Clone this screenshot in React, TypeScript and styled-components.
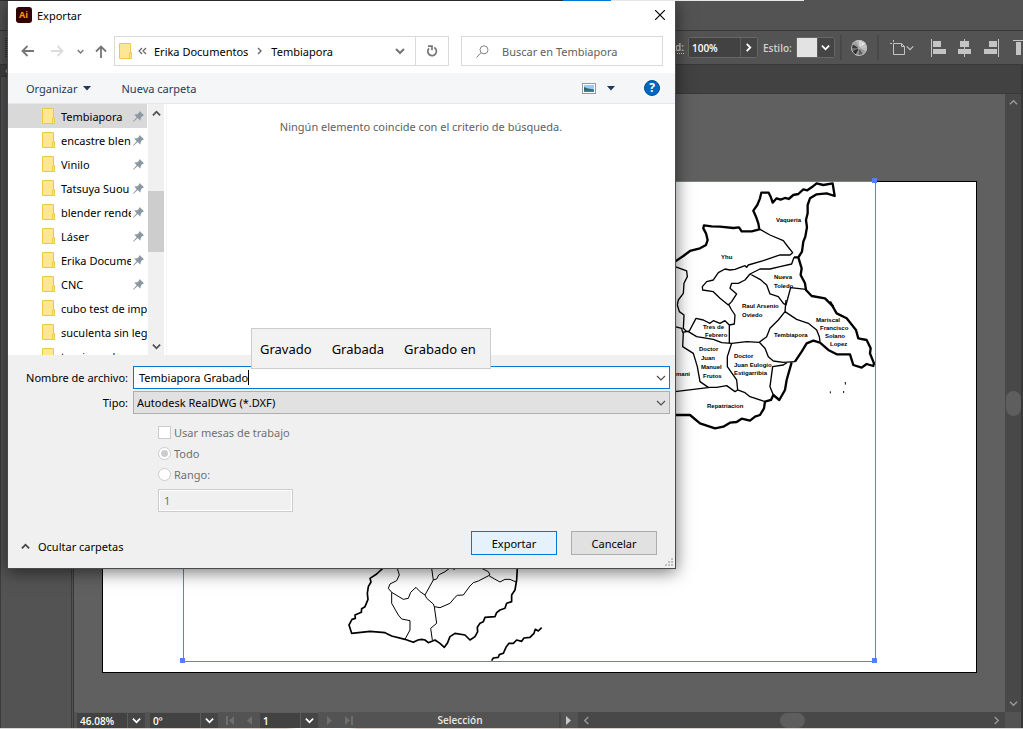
import React from "react";
import styled, { createGlobalStyle } from "styled-components";

const GlobalStyle = createGlobalStyle`
  *, *::before, *::after { box-sizing: border-box; }
  html, body, #root { height: 100%; }
  body { margin: 0; background: #535353; overflow: hidden; }
  body, button, input, select { font-family: "Noto Sans", "Open Sans", sans-serif; font-size: 11px; }
  button { padding: 0; border: 0; background: none; color: inherit; }
  svg { display: block; flex: none; }
`;

/* ---------- Illustrator workspace ---------- */

const Workspace = styled.div`
  position: relative;
  display: flex;
  flex-direction: column;
  height: 100vh;
  min-height: 600px;
  background: #535353;
  color: #dcdcdc;
  overflow: hidden;
`;

const EdgeStrip = styled.div`
  position: relative;
  z-index: 3;
  flex: none;
  display: grid;
  grid-template-columns: 563fr 48fr 193fr 219fr;
  height: 1px;
`;

const EdgePart = styled.span<{ $color: string }>`
  background: ${(p) => p.$color};
`;

const MenuBar = styled.div`
  flex: none;
  height: 29px;
`;

const ControlBar = styled.div`
  flex: none;
  display: grid;
  grid-template-columns: 675px 1fr;
  align-items: center;
  height: 35px;
  border: solid #383838;
  border-width: 1px 0;
  font-family: "Open Sans", sans-serif;
  font-size: 10px;
`;

const Gripper = styled.div`
  width: 3px;
  height: 20px;
  margin-left: 5px;
  background: repeating-linear-gradient(#333 0 1px, #535353 1px 2px);
`;

const ControlItems = styled.div`
  display: flex;
  align-items: center;
  overflow: hidden;
`;

const ControlLabel = styled.label<{ $dotted?: boolean }>`
  flex: none;
  margin-right: 4px;
  font-weight: 600;
  line-height: 12px;
  color: #d0d0d0;
  border-bottom: ${(p) => (p.$dotted ? "1px dotted #d0d0d0" : "0")};
`;

const ControlField = styled.div<{ $w: number }>`
  flex: none;
  display: grid;
  grid-template-columns: 1fr 17px;
  width: ${(p) => p.$w}px;
  height: 21px;
  margin-right: 5px;
  border: 1px solid #666;
  border-radius: 2px;
  background: #424242;
`;

const DarkInput = styled.input`
  min-width: 0;
  width: 100%;
  height: 100%;
  padding: 0 3px;
  border: 0;
  background: #424242;
  color: #fff;
  font-family: "Open Sans", sans-serif;
  font-size: 10px;
  font-weight: 600;
  outline: none;
`;

const DarkButton = styled.button`
  display: flex;
  align-items: center;
  justify-content: center;
  height: 100%;
  border-left: 1px solid #5c5c5c;
  background: #454545;
`;

const Swatch = styled.span`
  background: #e3e3e3;
`;

const Divider = styled.span<{ $mr: number }>`
  flex: none;
  width: 2px;
  height: 25px;
  margin-right: ${(p) => p.$mr}px;
  background: #484848;
`;

const ToolButton = styled.button<{ $mr: number }>`
  flex: none;
  display: flex;
  align-items: center;
  margin-right: ${(p) => p.$mr}px;
`;

const Main = styled.div`
  flex: 1;
  min-height: 0;
  display: grid;
  grid-template-columns: 72px 1fr;
`;

const ToolPanel = styled.div`
  border-right: 1px solid #3c3c3c;
  border-left: 1px solid #3c3c3c;
  background: #535353;
`;

const ToolPanelHead = styled.div`
  height: 12px;
  padding-left: 4px;
  border-bottom: 1px solid #383838;
  background: #424242;
  color: #aaa;
  font-size: 10px;
  line-height: 10px;
`;

const DocumentPanel = styled.div`
  display: flex;
  flex-direction: column;
  min-width: 0;
  margin-left: 1px;
  border: solid #383838;
  border-width: 0 2px 1px 1px;
`;

const TabStrip = styled.div`
  flex: none;
  height: 29px;
  border-bottom: 1px solid #383838;
  background: #424242;
`;

const CanvasRow = styled.div`
  flex: 1;
  min-height: 0;
  display: grid;
  grid-template-columns: 1fr 16px;
`;

const Canvas = styled.div`
  display: flex;
  padding: 87px 28px 39px;
  background: #606060;
`;

const Artboard = styled.div`
  flex: 1;
  min-width: 0;
  border: 1px solid #000;
  background: #fff;
`;

const Drawing = styled.svg`
  margin: -1px;
  overflow: visible;
`;

const MapText = styled.text`
  font-family: "Liberation Sans", sans-serif;
  font-size: 6px;
  font-weight: 700;
  fill: #000;
`;

const VScroll = styled.div`
  display: flex;
  flex-direction: column;
  align-items: center;
  justify-content: space-between;
  padding: 4px 0;
  background: #484848;
`;

const Thumb = styled.span<{ $w: number; $h: number }>`
  width: ${(p) => p.$w}px;
  height: ${(p) => p.$h}px;
  border-radius: 8px;
  background: #5e5e5e;
`;

const StatusBar = styled.div`
  flex: none;
  display: grid;
  grid-template-columns: 3px 68px 5px 68px 42px 58px 43px 198px 2px 17px 1fr 16px;
  height: 16px;
  background: #484848;
  font-family: "Open Sans", sans-serif;
  font-size: 10px;
  color: #e6e6e6;
`;

const StatusCell = styled.div<{ $light?: boolean }>`
  display: flex;
  align-items: center;
  justify-content: center;
  gap: 9px;
  background: ${(p) => (p.$light ? "#535353" : "#484848")};
  font-weight: 600;
`;

const StatusField = styled.div`
  display: grid;
  grid-template-columns: 1fr 18px;
  border-top: 1px solid #5c5c5c;
`;

const HScroll = styled.div`
  display: flex;
  align-items: center;
  justify-content: space-between;
  padding: 0 4px;
  background: #484848;
`;

const HTrack = styled.div`
  flex: 1;
  display: grid;
  grid-template-columns: 187fr 25px 186fr;
`;

const ScreenEdge = styled.div`
  flex: none;
  height: 1px;
  background: linear-gradient(90deg, #d8d8d8, #d9cfc8 28%, #fff 29%, #fff 34%, #d9cfc8 35%, #d8d8d8);
`;

/* ---------- Export dialog ---------- */

const Dialog = styled.section`
  position: absolute;
  z-index: 2;
  top: 0;
  left: 7px;
  width: min(669px, calc(100% - 14px));
  border: 1px solid #4a4a4a;
  border-top-color: #2d2a2b;
  background: #fff;
  color: #000;
  box-shadow: 0 3px 16px rgba(0, 0, 0, 0.55);
`;

const TitleBar = styled.header`
  display: flex;
  align-items: center;
  height: 28px;
  padding: 0 10px 0 8px;
`;

const Title = styled.h1`
  flex: 1;
  margin: 0 0 0 5px;
  font-size: 11px;
  font-weight: 400;
`;

const AddressRow = styled.div`
  display: flex;
  align-items: center;
  height: 44px;
  padding: 0 12px 0 13px;
`;

const NavButton = styled.button<{ $mr: number }>`
  flex: none;
  margin-right: ${(p) => p.$mr}px;
`;

const AddressBox = styled.div`
  flex: 1;
  min-width: 0;
  display: flex;
  align-items: center;
  height: 30px;
  padding-left: 4px;
  border: 1px solid #d9d9d9;
`;

const Crumb = styled.a`
  margin: 0 2px;
  color: #000;
  text-decoration: none;
  white-space: nowrap;
`;

const Spacer = styled.span`
  flex: 1;
`;

const RefreshButton = styled.button`
  display: flex;
  align-items: center;
  justify-content: center;
  width: 33px;
  height: 28px;
  margin-left: 10px;
  border-left: 1px solid #d9d9d9;
`;

const SearchBox = styled.label`
  flex: none;
  display: flex;
  align-items: center;
  width: 202px;
  height: 30px;
  margin-left: 12px;
  padding-left: 14px;
  border: 1px solid #d9d9d9;
`;

const SearchInput = styled.input`
  flex: 1;
  min-width: 0;
  margin-left: 13px;
  padding: 0;
  border: 0;
  outline: none;
  &::placeholder { color: #606060; opacity: 1; }
`;

const Toolbar = styled.div`
  display: flex;
  align-items: center;
  height: 31px;
  padding: 0 15px 0 18px;
  border-bottom: 1px solid #e3e6ea;
  background: #f5f6f7;
  color: #1e395b;
`;

const ToolbarButton = styled.button<{ $mr?: number }>`
  display: flex;
  align-items: center;
  gap: 6px;
  margin-right: ${(p) => p.$mr ?? 0}px;
`;

const Browser = styled.div`
  display: grid;
  grid-template-columns: 139px 17px 1fr;
  height: 251px;
`;

const FolderList = styled.ul`
  margin: 0;
  padding: 0;
  list-style: none;
  overflow: hidden;
`;

const FolderItem = styled.li<{ $selected?: boolean }>`
  display: flex;
  align-items: center;
  height: 24px;
  padding: 0 0 0 34px;
  background: ${(p) => (p.$selected ? "#d9d9d9" : "transparent")};
`;

const FolderName = styled.span`
  flex: 1;
  min-width: 0;
  margin-left: 6px;
  overflow: hidden;
  white-space: nowrap;
`;

const PinSlot = styled.span`
  margin: 0 3px 0 2px;
`;

const ListScroll = styled.div`
  display: grid;
  grid-template-rows: 87px 61px 1fr;
  justify-items: center;
  margin-left: 1px;
  padding-bottom: 4px;
  background: #f0f0f0;
`;

const ListThumb = styled.span`
  width: 100%;
  background: #cdcdcd;
`;

const ScrollEnd = styled.span<{ $end?: boolean }>`
  align-self: ${(p) => (p.$end ? "end" : "start")};
  padding: ${(p) => (p.$end ? "0" : "5px 0 0")};
`;

const FilePane = styled.div`
  margin-left: 2px;
  padding-top: 14px;
  border-left: 1px solid #f5f5f5;
  color: #606060;
  line-height: 18px;
  text-align: center;
`;

const FormPanel = styled.form`
  padding: 11px 5px 0 8px;
  height: 213px;
  background: #f0f0f0;
`;

const FieldRow = styled.div`
  position: relative;
  display: grid;
  grid-template-columns: 112px 1fr;
  column-gap: 5px;
  align-items: center;
  margin-bottom: 2px;
`;

const FieldLabel = styled.label`
  text-align: right;
  white-space: nowrap;
`;

const Combo = styled.div<{ $active?: boolean }>`
  display: flex;
  align-items: center;
  height: 23px;
  padding-right: 3px;
  border: 1px solid ${(p) => (p.$active ? "#0078d7" : "#adadad")};
  background: ${(p) => (p.$active ? "#fff" : "#e1e1e1")};
`;

const NameInput = styled.input`
  field-sizing: content;
  min-width: 0;
  padding: 0 0 0 5px;
  border: 0;
  background: none;
  outline: none;
  caret-color: transparent;
`;

const Caret = styled.span`
  width: 1px;
  height: 15px;
  background: #000;
`;

const TypeSelect = styled.select`
  flex: 1;
  min-width: 0;
  padding: 0 3px;
  border: 0;
  background: none;
  appearance: none;
  outline: none;
  color: #000;
`;

const Suggestions = styled.div`
  position: absolute;
  z-index: 1;
  bottom: 20px;
  left: 235px;
  display: flex;
  align-items: center;
  gap: 20px;
  height: 41px;
  padding: 0 14px 0 8px;
  border: 1px solid #ccc;
  background: #f2f2f2;
`;

const Suggestion = styled.button`
  font-size: 13px;
  white-space: nowrap;
`;

const Options = styled.fieldset`
  margin: 12px 0 0 142px;
  padding: 0;
  border: 0;
  color: #707070;
`;

const Option = styled.label`
  display: flex;
  align-items: center;
  gap: 3px;
  height: 13px;
  margin-bottom: 8px;
`;

const Check = styled.input`
  appearance: none;
  width: 13px;
  height: 13px;
  margin: 0;
  border: 1px solid #ccc;
  background: #fff;
`;

const Radio = styled(Check)`
  border-radius: 50%;
  &:checked { background: radial-gradient(#ccc 0 3px, #fff 4px); }
`;

const RangeInput = styled.input`
  display: block;
  width: 135px;
  height: 23px;
  padding: 0 5px;
  border: 1px solid #ccc;
  background: #f0f0f0;
  box-shadow: inset 0 0 0 1px #fff;
  color: #707070;
`;

const Footer = styled.footer`
  display: flex;
  align-items: center;
  gap: 14px;
  margin: 19px 13px 0 5px;
`;

const HideFolders = styled.button`
  display: flex;
  align-items: center;
  gap: 8px;
  margin-right: auto;
  padding-top: 6px;
`;

const ActionButton = styled.button<{ $primary?: boolean }>`
  width: 86px;
  height: 24px;
  border: 1px solid ${(p) => (p.$primary ? "#0078d7" : "#adadad")};
  background: ${(p) => (p.$primary ? "#e5f1fb" : "#e1e1e1")};
`;

const Grip = styled.svg`
  position: absolute;
  right: 2px;
  bottom: 2px;
`;

/* ---------- Icons ---------- */

type Dir = "up" | "down" | "left" | "right";
const turns: Record<Dir, number> = { down: 0, left: 90, up: 180, right: 270 };

const Chevron = ({ dir = "down", color = "#fff", w = 2, size = 9 }: { dir?: Dir; color?: string; w?: number; size?: number }) => (
  <svg width={size} height={size} viewBox="0 0 10 10" fill="none" stroke={color} strokeWidth={w}>
    <path d="M1 3l4 4 4-4" transform={`rotate(${turns[dir]} 5 5)`} />
  </svg>
);

const CrumbArrow = () => (
  <svg width="19" height="8" viewBox="0 0 19 8" fill="none" stroke="#666" strokeWidth="1.400">
    <path d="M8 1l3 3-3 3" />
  </svg>
);

const DropArrow = () => (
  <svg width="8" height="5" viewBox="0 0 8 5">
    <path d="M0 0h8L4 4.500z" fill="#1e395b" />
  </svg>
);

const Folder = () => (
  <svg width="13" height="16" viewBox="0 0 13 16">
    <path d="M.5.5h11v9h1v6H.5z" fill="#ffe693" stroke="#ecc84c" />
    <path d="M10.500 15.500v-5.500h2" fill="none" stroke="#ecc84c" />
  </svg>
);

const Pin = () => (
  <svg width="11" height="11" viewBox="0 0 11 11" fill="#8b98a3">
    <path d="M6.500 0L11 4.200 9.600 4.900 7.800 6.700 7.500 9.700 4.700 7 .5 10.800 0 10.300 3.700 6.200 1.200 3.500 4.400 3.200 6.100 1.500z" />
  </svg>
);

const Play = ({ flip, bar, color = "#6e6e6e" }: { flip?: boolean; bar?: boolean; color?: string }) => (
  <svg width="9" height="9" viewBox="0 0 9 9" fill={color}>
    <g transform={flip ? "translate(9 0) scale(-1 1)" : undefined}>
      <path d="M1 0l5 4.500L1 9z" />
      {bar && <path d="M7 0h2v9H7z" />}
    </g>
  </svg>
);

const Wheel = () => (
  <svg width="16" height="16" viewBox="0 0 16 16">
    {["#d8d8d8", "#e6e6e6", "#c4c4c4", "#bababa", "#9a9a9a", "#606060", "#8a8a8a", "#292929", "#6a6a6a", "#3a3a3a", "#9f9f9f", "#b4b4b4"].map((c, i) => (
      <path key={i} d="M8 8L8 0A8 8 0 0 1 12 1.070z" fill={c} transform={`rotate(${i * 30} 8 8)`} />
    ))}
    <circle cx="8" cy="8" r="7.500" fill="none" stroke="#bdbdbd" />
    <circle cx="8" cy="8" r="1.500" fill="#aaa" />
  </svg>
);

/* ---------- Map drawing ---------- */

const upperThick =
  "M15 275L40 258 60 243 90 235 108 225 113 210 108 190 100 175 102 166 125 169 150 170 190 174 207 172 215 184 245 184 268 178 265 160 258 140 250 122 262 105 270 85 274 68 296 68 302 80 308 98 320 85 332 89 345 84 356 87 370 75 385 72 400 58 412 61 425 52 440 40 460 45 488 40 494 78 470 70 440 73 420 85 413 105 413 130 408 150 411 172 406 200 400 215 396 245 385 262 395 295 392 315 405 340 408 360 425 378 465 385 490 410M385 262L372 262";
const upperThin =
  "M270 178L300 195 340 212 352 228 368 248 360 255 330 255 280 272 235 285 230 292 225 287 195 298 180 300 165 297 145 308 130 330 110 335 97 350 98 360 130 365 150 385 175 405M372 262L365 282 330 290 300 297 270 297 240 312 225 330 205 340 185 340 180 355 200 372 185 395 175 405M240 312L270 328 290 345 300 372 325 380 340 400 348 405 362 353 408 358M15 290L50 303 52 320 42 340 40 370 25 390 22 405";
const lowerThick =
  "M365 187L350 240 345 270 328 300 310 285 303 300 285 305 282 325 270 345 255 350 240 362 215 356 200 366 180 368 160 380 135 385 90 370 60 345 15 345M375 185L395 155 410 130 430 122 450 128 475 150 500 163 540 163 550 195 575 203 590 192 610 198 612 190 600 160 602 145 590 120 565 115 558 90 530 55 500 40 480 5";
const lowerMid =
  "M22 15L28 35 42 45 40 85 50 95M15 80L35 85 38 97 58 93 78 55 100 60 120 70 130 62 150 70 165 62 178 75 178 130M175 12L185 30 195 45 193 72 178 75M55 95L80 110 130 118 155 128 185 130 230 125 268 127 290 110 300 85 325 60 345 35 348 0M345 35L380 58 415 70 440 90 448 110 450 125M268 127L285 145 295 170 310 183 340 187 375 185M310 285L300 260 308 200 340 195 352 187M285 305L240 290 225 278 203 270 200 240 172 200 172 170 185 130M203 270L195 275 170 257 140 262 120 262 15 275M40 97L38 140 70 160 82 200 90 245 115 262";
const southThick =
  "M158 25L140 42 120 55 123 66 115 80 112 100 114 118 105 140 95 146 94 157 75 165 76 175 66 178 57 195 65 220 120 214 165 218 185 228 225 238 250 247 264 240 275 238 285 240 295 248 315 240 330 250 343 262 352 250 360 230 375 220 405 225 420 240 435 230 443 215 442 202 450 190 460 185 465 172 495 170 500 158 510 150 525 145 530 130 545 125 545 105 555 90 560 60 562 25M485 302L490 294 505 292 508 284 520 280 528 262 537 250 550 250 560 240 575 244 582 234 600 232 612 220 616 208 625 213 635 203";
const southThin =
  "M202 25L208 45 200 62 180 72 175 85 185 97 220 118 235 115 242 97 258 82 270 95 285 105 310 60 305 25M310 60L320 57 326 45 345 35 360 24 375 28M285 105L290 115 310 132 313 140 330 143 360 130 375 112 382 106 400 105 420 78 430 68 445 63 480 45 475 35 455 25M478 48L510 66 525 58 540 58 558 66M185 97L185 130 205 165 215 177 240 182 240 210 225 238M313 140L320 190 302 205 307 240";

const labels: [number, number, string][] = [
  [776, 222, "Vaqueria"], [721, 259, "Yhu"],
  [774, 279, "Nueva"], [774, 288, "Toledo"],
  [742, 308, "Raul Arsenio"], [742, 317, "Oviedo"],
  [703, 329, "Tres de"], [705, 337, "Febrero"],
  [774, 337, "Tembiapora"],
  [816, 322, "Mariscal"], [820, 330, "Francisco"], [825, 338, "Solano"], [830, 346, "Lopez"],
  [699, 351, "Doctor"], [701, 360, "Juan"], [701, 369, "Manuel"], [703, 378, "Frutos"],
  [734, 358, "Doctor"], [734, 367, "Juan Eulogio"], [734, 375, "Estigarribia"],
  [707, 408, "Repatriacion"], [676, 376, "mani"],
];

const MapDrawing = () => (
  <Drawing width="875" height="492" viewBox="102 181 875 492" fill="none" stroke="#000" strokeLinejoin="round">
    <g transform="translate(670 170) scale(.3333)">
      <path d={upperThick} strokeWidth="7" />
      <path d={upperThin} strokeWidth="4" />
    </g>
    <g transform="translate(670 300) scale(.3333)">
      <path d={lowerThick} strokeWidth="7" />
      <path d={lowerMid} strokeWidth="4" />
      <path d="M526 246v8M481 274v6M521 273v6" strokeWidth="3" />
    </g>
    <g transform="translate(330 560) scale(.3333)">
      <path d={southThick} strokeWidth="5" />
      <path d={southThin} strokeWidth="3" />
    </g>
    <g stroke="none">
      {labels.map(([x, y, t], i) => (
        <MapText key={i} x={x} y={y}>{t}</MapText>
      ))}
    </g>
    <path d="M182.500 181.500H875.500V661.500H183.500V181.500" stroke="#4f80ff" />
    <path d="M872 178h5v5h-5zM180 658h5v5h-5zM872 658h5v5h-5z" fill="#4f80ff" stroke="none" />
  </Drawing>
);

/* ---------- Page ---------- */

const folders: { name: string; pinned: boolean }[] = [
  { name: "Tembiapora", pinned: true },
  { name: "encastre blen", pinned: true },
  { name: "Vinilo", pinned: true },
  { name: "Tatsuya Suou", pinned: true },
  { name: "blender rende", pinned: true },
  { name: "Láser", pinned: true },
  { name: "Erika Docume", pinned: true },
  { name: "CNC", pinned: true },
  { name: "cubo test de imp", pinned: false },
  { name: "suculenta sin leg", pinned: false },
  { name: "teori pruebas", pinned: false },
];

const ExportDialog = () => (
  <Dialog role="dialog" aria-label="Exportar">
    <TitleBar>
      <svg width="16" height="16" viewBox="0 0 16 16">
        <rect width="16" height="16" rx="3" fill="#310000" />
        <text x="3" y="11" fontFamily="Open Sans, sans-serif" fontSize="9" fontWeight="700" fill="#ff9a00">Ai</text>
      </svg>
      <Title>Exportar</Title>
      <button aria-label="Cerrar">
        <svg width="10" height="10" viewBox="0 0 10 10" stroke="#000" strokeWidth="1.200"><path d="M0 0l10 10M10 0L0 10" /></svg>
      </button>
    </TitleBar>

    <AddressRow>
      <NavButton aria-label="Atrás" $mr={17}>
        <svg width="13" height="12" viewBox="0 0 13 12" fill="none" stroke="#767676" strokeWidth="1.800"><path d="M13 6H1.500M6.500 1l-5 5 5 5" /></svg>
      </NavButton>
      <NavButton aria-label="Adelante" $mr={13}>
        <svg width="13" height="12" viewBox="0 0 13 12" fill="none" stroke="#dcdcdc" strokeWidth="1.800"><path d="M0 6h11.500M6.500 1l5 5-5 5" /></svg>
      </NavButton>
      <NavButton aria-label="Recientes" $mr={11}>
        <Chevron color="#767676" size={7} />
      </NavButton>
      <NavButton aria-label="Subir" $mr={7}>
        <svg width="12" height="13" viewBox="0 0 12 13" fill="none" stroke="#767676" strokeWidth="1.800"><path d="M6 13V1.500M1 6.500l5-5 5 5" /></svg>
      </NavButton>
      <AddressBox>
        <Folder />
        <svg width="20" height="8" viewBox="0 0 20 8" fill="none" stroke="#666" strokeWidth="1.200"><path d="M10 1L7 4l3 3M14 1l-3 3 3 3" /></svg>
        <Crumb href="#">Erika Documentos</Crumb>
        <CrumbArrow />
        <Crumb href="#">Tembiapora</Crumb>
        <Spacer />
        <button aria-label="Ubicaciones anteriores"><Chevron color="#767676" size={10} /></button>
        <RefreshButton aria-label="Actualizar">
          <svg width="12" height="12" viewBox="0 0 12 12" fill="none" stroke="#767676" strokeWidth="1.700"><path d="M8.200 2.600A4.300 4.300 0 1 1 3 3.400M2 1.200h4v4" /></svg>
        </RefreshButton>
      </AddressBox>
      <SearchBox>
        <svg width="13" height="13" viewBox="0 0 13 13" fill="none" stroke="#8a7f86"><circle cx="8" cy="4.800" r="4" /><path d="M5 7.800L.5 12.500" /></svg>
        <SearchInput aria-label="Buscar" placeholder="Buscar en Tembiapora" />
      </SearchBox>
    </AddressRow>

    <Toolbar>
      <ToolbarButton $mr={30}>
        Organizar
        <DropArrow />
      </ToolbarButton>
      <ToolbarButton>Nueva carpeta</ToolbarButton>
      <Spacer />
      <ToolbarButton aria-label="Cambiar la vista" $mr={11}>
        <svg width="14" height="11" viewBox="0 0 14 11">
          <rect x=".5" y=".5" width="13" height="10" fill="#fff" stroke="#999" />
          <path d="M2 2h10v7H2z" fill="#9cc9f5" />
          <path d="M2 4l4 1.500 6 1V8H2z" fill="#2f6b58" />
          <path d="M2 7.500h10V9H2z" fill="#3f7fc0" />
        </svg>
      </ToolbarButton>
      <ToolbarButton aria-label="Más opciones" $mr={29}>
        <DropArrow />
      </ToolbarButton>
      <ToolbarButton aria-label="Ayuda">
        <svg width="16" height="16" viewBox="0 0 16 16">
          <circle cx="8" cy="8" r="7.500" fill="#0067c0" stroke="#004f94" />
          <text x="8" y="12" textAnchor="middle" fontFamily="Open Sans, sans-serif" fontSize="12" fontWeight="700" fill="#fff">?</text>
        </svg>
      </ToolbarButton>
    </Toolbar>

    <Browser>
      <FolderList>
        {folders.map((f, i) => (
          <FolderItem key={f.name} $selected={i === 0}>
            <Folder />
            <FolderName>{f.name}</FolderName>
            {f.pinned && <PinSlot><Pin /></PinSlot>}
          </FolderItem>
        ))}
      </FolderList>
      <ListScroll>
        <ScrollEnd><Chevron dir="up" color="#505050" /></ScrollEnd>
        <ListThumb />
        <ScrollEnd $end><Chevron color="#505050" /></ScrollEnd>
      </ListScroll>
      <FilePane>Ningún elemento coincide con el criterio de búsqueda.</FilePane>
    </Browser>

    <FormPanel onSubmit={(e) => e.preventDefault()}>
      <FieldRow>
        <FieldLabel htmlFor="file-name">Nombre de archivo:</FieldLabel>
        <Combo $active>
          <NameInput id="file-name" defaultValue="Tembiapora Grabado" />
          <Caret />
          <Spacer />
          <Chevron color="#505050" w={1.2} size={10} />
        </Combo>
        <Suggestions>
          <Suggestion type="button">Gravado</Suggestion>
          <Suggestion type="button">Grabada</Suggestion>
          <Suggestion type="button">Grabado en</Suggestion>
        </Suggestions>
      </FieldRow>
      <FieldRow>
        <FieldLabel htmlFor="file-type">Tipo:</FieldLabel>
        <Combo>
          <TypeSelect id="file-type"><option>Autodesk RealDWG (*.DXF)</option></TypeSelect>
          <Chevron color="#505050" w={1.2} size={10} />
        </Combo>
      </FieldRow>
      <Options disabled>
        <Option><Check type="checkbox" />Usar mesas de trabajo</Option>
        <Option><Radio type="radio" name="boards" defaultChecked />Todo</Option>
        <Option><Radio type="radio" name="boards" />Rango:</Option>
        <RangeInput aria-label="Rango" defaultValue="1" />
      </Options>
      <Footer>
        <HideFolders type="button"><Chevron dir="up" color="#444" />Ocultar carpetas</HideFolders>
        <ActionButton type="submit" $primary>Exportar</ActionButton>
        <ActionButton type="button">Cancelar</ActionButton>
      </Footer>
    </FormPanel>
    <Grip width="8" height="8" viewBox="0 0 8 8" fill="#bfbfbf">
      <path d="M6 0h2v2H6zM3 3h2v2H3zM6 3h2v2H6zM0 6h2v2H0zM3 6h2v2H3zM6 6h2v2H6z" />
    </Grip>
  </Dialog>
);

export default function App() {
  return (
    <Workspace>
      <GlobalStyle />
      <EdgeStrip>
        <EdgePart $color="#2d2a2b" />
        <EdgePart $color="#0078d7" />
        <EdgePart $color="#e6e6e6" />
        <EdgePart $color="#535353" />
      </EdgeStrip>
      <MenuBar />
      <ControlBar>
        <Gripper />
        <ControlItems>
          <ControlLabel htmlFor="opacity" $dotted>d:</ControlLabel>
          <ControlField $w={70}>
            <DarkInput id="opacity" defaultValue="100%" />
            <DarkButton aria-label="Opacidad"><Chevron dir="right" /></DarkButton>
          </ControlField>
          <ControlLabel as="span">Estilo:</ControlLabel>
          <ControlField $w={39}>
            <Swatch />
            <DarkButton aria-label="Estilo"><Chevron /></DarkButton>
          </ControlField>
          <Divider $mr={9} />
          <ToolButton aria-label="Volver a colorear" $mr={10}><Wheel /></ToolButton>
          <Divider $mr={11} />
          <ToolButton aria-label="Mesa de trabajo" $mr={17}>
            <svg width="16" height="16" viewBox="0 0 16 16" fill="none" stroke="#c4c4c4"><path d="M3.500 3.500h8l3 3v8h-11zM3.500 0v2M0 3.500h2M11.500 3.500v3h3" /></svg>
            <Chevron color="#c4c4c4" w={1.5} size={8} />
          </ToolButton>
          <ToolButton aria-label="Alinear a la izquierda" $mr={12}>
            <svg width="15" height="18" viewBox="0 0 15 18" fill="#c4c4c4"><path d="M0 0h1v18H0zM2 2h8v6H2zM2 10h13v5H2z" /></svg>
          </ToolButton>
          <ToolButton aria-label="Centrar" $mr={13}>
            <svg width="13" height="18" viewBox="0 0 13 18" fill="#c4c4c4"><path d="M6 0h1v18H6zM2 2h9v6H2zM0 10h13v5H0z" /></svg>
          </ToolButton>
          <ToolButton aria-label="Alinear a la derecha" $mr={14}>
            <svg width="15" height="18" viewBox="0 0 15 18" fill="#c4c4c4"><path d="M14 0h1v18h-1zM5 2h8v6H5zM0 10h13v5H0z" /></svg>
          </ToolButton>
          <ToolButton aria-label="Alinear arriba" $mr={0}>
            <svg width="18" height="15" viewBox="0 0 18 15" fill="#c4c4c4"><path d="M0 0h18v1H0zM3 2h5v13H3zM10 2h6v8h-6z" /></svg>
          </ToolButton>
        </ControlItems>
      </ControlBar>

      <Main>
        <ToolPanel>
          <ToolPanelHead>«</ToolPanelHead>
        </ToolPanel>
        <DocumentPanel>
          <TabStrip />
          <CanvasRow>
            <Canvas>
              <Artboard><MapDrawing /></Artboard>
            </Canvas>
            <VScroll>
              <Chevron dir="up" color="#9a9a9a" w={1.5} />
              <Thumb $w={15} $h={25} />
              <Chevron color="#9a9a9a" w={1.5} />
            </VScroll>
          </CanvasRow>
          <StatusBar>
            <StatusCell $light />
            <StatusField>
              <DarkInput aria-label="Zoom" defaultValue="46.08%" />
              <DarkButton aria-label="Niveles de zoom"><Chevron /></DarkButton>
            </StatusField>
            <StatusCell $light />
            <StatusField>
              <DarkInput aria-label="Rotación" defaultValue="0º" />
              <DarkButton aria-label="Ángulos"><Chevron /></DarkButton>
            </StatusField>
            <StatusCell $light><Play flip bar /><Play flip /></StatusCell>
            <StatusField>
              <DarkInput aria-label="Mesa" defaultValue="1" />
              <DarkButton aria-label="Mesas"><Chevron /></DarkButton>
            </StatusField>
            <StatusCell $light><Play /><Play bar /></StatusCell>
            <StatusCell $light>Selección</StatusCell>
            <StatusCell />
            <StatusCell $light><Play color="#c8c8c8" /></StatusCell>
            <HScroll>
              <Chevron dir="left" color="#9a9a9a" w={1.5} />
              <HTrack><span /><Thumb $w={25} $h={15} /><span /></HTrack>
              <Chevron dir="right" color="#9a9a9a" w={1.5} />
            </HScroll>
            <StatusCell $light />
          </StatusBar>
        </DocumentPanel>
      </Main>
      <ScreenEdge />
      <ExportDialog />
    </Workspace>
  );
}
